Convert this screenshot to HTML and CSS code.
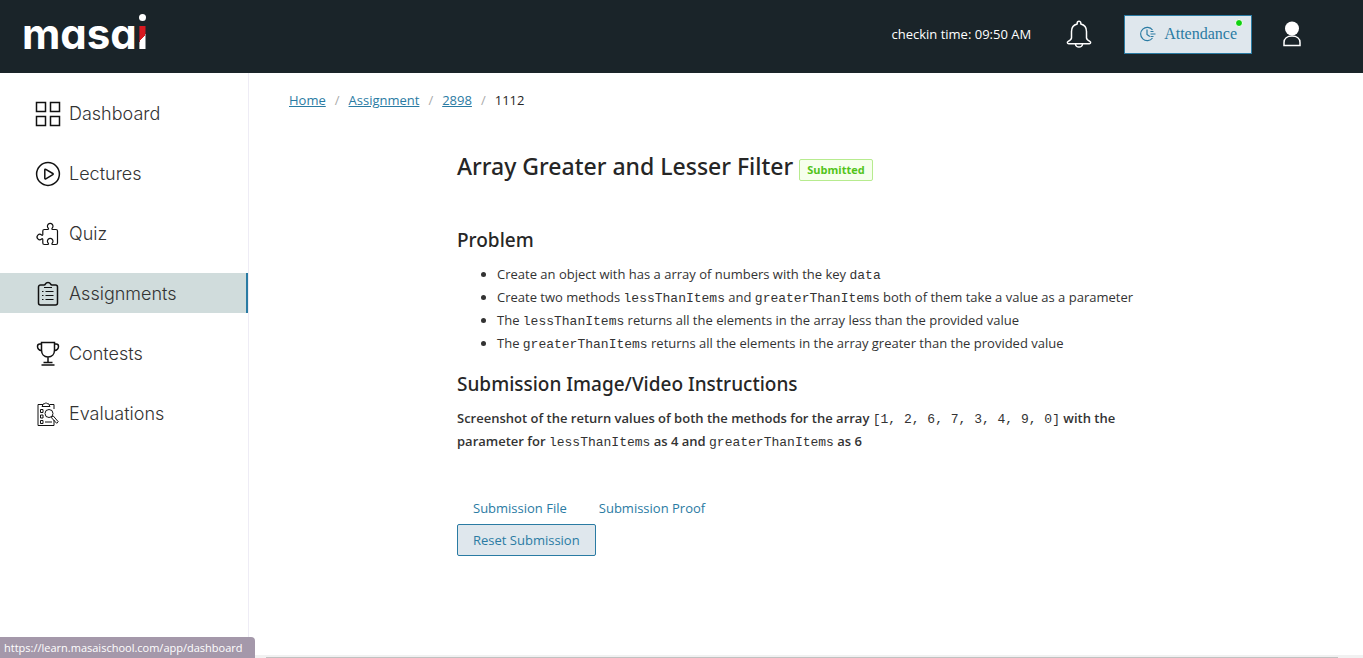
FILE: index.html
```html
<!DOCTYPE html>
<html lang="en">
<head>
<meta charset="utf-8">
<meta name="viewport" content="width=device-width, initial-scale=1">
<title>Array Greater and Lesser Filter</title>
<link rel="stylesheet" href="styles.css">
</head>
<body>
<header class="topbar">
  <a class="logo" href="#">masa<span class="logo-i">i</span></a>
  <div class="topbar-tools">
    <span class="checkin">checkin time: 09:50 AM</span>
    <button class="icon-button" type="button" aria-label="Notifications">
      <svg width="26" height="28" viewBox="0 0 26 28" fill="none" stroke="#fff" stroke-width="1.5" stroke-linejoin="round"><path d="M11.2 4.1V3a1.8 1.8 0 0 1 3.6 0v1.1c3.700.9 5.700 3.900 5.700 7.400v6.200c0 1.700 1.200 2.600 3.300 3.700 1.400.8.900 2.300-.5 2.300H2.700c-1.400 0-1.900-1.500-.5-2.300 2.100-1.100 3.300-2 3.300-3.700v-6.200c0-3.500 2-6.500 5.700-7.400z"/><path d="M9.500 23.900a3.500 3.200 0 0 0 7 0"/></svg>
    </button>
    <button class="attendance" type="button">
      <svg width="18" height="16" viewBox="0 0 18 16" fill="none" stroke="#2a7ba3" stroke-width="1.2"><path d="M13.500 4A6.600 6.600 0 1 0 13.500 12M8 3.500v5l2.800 2M11.500 5.500h3M11.500 8h5M11.500 10.500h3"/></svg>
      <span>Attendance</span>
      <span class="status-dot"></span>
    </button>
    <button class="icon-button" type="button" aria-label="Profile">
      <svg width="18" height="26" viewBox="0 0 18 26"><circle cx="9" cy="7.500" r="7" fill="#fff"/><path d="M1 24.400v-3C1 17.600 4.200 15 9 15s8 2.600 8 6.400v3z" fill="none" stroke="#fff" stroke-width="1.500"/></svg>
    </button>
  </div>
</header>
<div class="shell">
  <nav class="sidebar" aria-label="Main">
    <a class="nav-item" href="#"><svg class="nav-icon" viewBox="0 0 26 26"><path d="M1.500 1.500h9v9h-9zM15.500 1.500h9v9h-9zM1.500 15.500h9v9h-9zM15.500 15.500h9v9h-9z"/></svg>Dashboard</a>
    <a class="nav-item" href="#"><svg class="nav-icon" viewBox="0 0 26 26"><circle cx="13" cy="13" r="11.400"/><path d="M9.800 8.900v8.400c0 .6.500.9 1 .6l7-4.200c.5-.3.5-.9 0-1.200l-7-4.200c-.5-.3-1 0-1 .6z"/></svg>Lectures</a>
    <a class="nav-item" href="#"><svg class="nav-icon nav-icon-fine" viewBox="0 0 26 26"><path d="M9.300 8.500h3.500c.8 0 1-.6.500-1.200a2.800 2.800 0 1 1 3.800 0c-.5.6-.3 1.200.5 1.200h3.400c1 0 1.500.5 1.500 1.500v12c0 1-.5 1.500-1.500 1.500h-3.400c-.8 0-1-.6-.5-1.200a2.800 2.800 0 1 0-3.800 0c.5.6.3 1.200-.5 1.200H9.300c-1 0-1.500-.5-1.500-1.500V18.500c0-.8-.6-1-1.200-.5a2.700 2.700 0 1 1 0-4c.6.500 1.200.3 1.200-.5V10c0-1 .5-1.500 1.500-1.500z"/></svg>Quiz</a>
    <a class="nav-item nav-item-active" href="#" aria-current="page"><svg class="nav-icon" viewBox="0 0 26 26"><path d="M9 4H5.500A2 2 0 0 0 3.500 6v16a2 2 0 0 0 2 2h15a2 2 0 0 0 2-2V6a2 2 0 0 0-2-2H17c-.9 0-1.200-.5-1.500-1.100-.9-1.900-4.100-1.900-5 0C10.200 3.500 9.900 4 9 4z"/><path stroke-width="1.200" d="M9 6.500h8M10.500 10.500h8M10.500 14.500h8M10.500 18.500h8M7 10.500h1.500M7 14.500h1.500M7 18.500h1.500"/></svg>Assignments</a>
    <a class="nav-item" href="#"><svg class="nav-icon" viewBox="0 0 26 26"><path d="M6.500 1.500h13v7.500c0 4-2.500 7-6.500 7s-6.500-3-6.500-7zM6.500 3H4.800C3.300 3 2.500 4 2.500 5.500 2.500 8 4 9.300 6.800 9.800M19.500 3h1.700c1.500 0 2.300 1 2.300 2.500 0 2.500-1.500 3.800-4.300 4.300M13 16v5.500M8.500 21.500h9M6.500 24h13"/></svg>Contests</a>
    <a class="nav-item" href="#"><svg class="nav-icon nav-icon-thin" viewBox="0 0 26 26"><path d="M8 3.500H3v21h16V19M14.500 3.500H19V8M7 5.500h8l-1.500-2.800h-1.300a1.300 1.300 0 0 0-2.400 0H8.500zM5.500 8.500H8v3H5.500zM5.500 14H8v3H5.500zM5.500 19.500H8v3H5.500zM10 21h7"/><circle cx="14" cy="12.500" r="4"/><path d="M17 15.500l1.200-.6 5 5.800-1.500 1.600-5.200-5.500z"/></svg>Evaluations</a>
  </nav>
  <main class="content">
    <nav class="breadcrumb" aria-label="Breadcrumb">
      <a href="#">Home</a><span class="slash">/</span><a href="#">Assignment</a><span class="slash">/</span><a href="#">2898</a><span class="slash">/</span><span>1112</span>
    </nav>
    <article class="assignment">
      <h1 class="title">Array Greater and Lesser Filter <span class="tag">Submitted</span></h1>
      <h2 class="section-title">Problem</h2>
      <ul class="steps">
        <li>Create an object with has a array of numbers with the key <code>data</code></li>
        <li>Create two methods <code>lessThanItems</code> and <code>greaterThanItems</code> both of them take a value as a parameter</li>
        <li>The <code>lessThanItems</code> returns all the elements in the array less than the provided value</li>
        <li>The <code>greaterThanItems</code> returns all the elements in the array greater than the provided value</li>
      </ul>
      <h2 class="section-title">Submission Image/Video Instructions</h2>
      <p class="instructions">Screenshot of the return values of both the methods for the array <code>[1, 2, 6, 7, 3, 4, 9, 0]</code> with the parameter for <code>lessThanItems</code> as 4 and <code>greaterThanItems</code> as 6</p>
      <div class="links"><a href="#">Submission File</a><a href="#">Submission Proof</a></div>
      <button class="reset" type="button">Reset Submission</button>
    </article>
  </main>
</div>
<div class="scroll-track"><div class="scroll-thumb"></div></div>
<div class="url-status">https://learn.masaischool.com/app/dashboard</div>
</body>
</html>
```
FILE: styles.css
```css
* { box-sizing: border-box; }
body {
  margin: 0;
  min-height: 100vh;
  display: flex;
  flex-direction: column;
  background: #fff;
  color: #262626;
  font: 13px/23px "Open Sans", "Noto Sans", sans-serif;
}
button { font: inherit; cursor: pointer; }
a { color: #2a7ba3; text-decoration: none; }
.topbar {
  display: flex;
  align-items: center;
  justify-content: space-between;
  height: 73px;
  padding: 0 62px 5px 22px;
  background: #1a2429;
  color: #fff;
}
.logo {
  color: #fff;
  font: 700 42px/52px Inter, sans-serif;
  font-feature-settings: "cv11";
}
.logo-i {
  position: relative;
  display: inline-block;
  background: linear-gradient(130deg, #d71920 50%, #fff 50%) 0 17px / 100% 26px no-repeat;
  background-clip: text;
  -webkit-background-clip: text;
  color: transparent;
}
.logo-i::after {
  content: "";
  position: absolute;
  top: 6px;
  left: calc(50% - 4px);
  width: 7px;
  height: 7px;
  border-radius: 50%;
  background: #fff;
}
.topbar-tools { display: flex; align-items: center; }
.checkin { margin-right: 35px; }
.icon-button {
  display: flex;
  padding: 0;
  border: 0;
  background: none;
}
.attendance {
  position: relative;
  display: flex;
  align-items: center;
  gap: 7px;
  height: 39px;
  margin: 0 31px 0 32px;
  padding: 0 14px;
  border: 1px solid #2a7ba3;
  background: #dfe7ed;
  color: #2a7ba3;
  font: 16px/24px "Liberation Serif", serif;
}
.status-dot {
  position: absolute;
  top: 3px;
  right: 8px;
  width: 8px;
  height: 8px;
  border: 1px solid #fff;
  border-radius: 50%;
  background: #0fd20f;
}
.shell { display: flex; flex: 1; }
.sidebar {
  display: flex;
  flex-direction: column;
  gap: 20px;
  width: 249px;
  padding-top: 20px;
  border-right: 1px solid #eeecf5;
}
.nav-item {
  display: flex;
  align-items: center;
  gap: 8px;
  height: 40px;
  padding: 2px 0 0 35px;
  color: #333;
  font: 300 18px/24px Inter, sans-serif;
}
.nav-item-active {
  border-right: 2px solid #2a7ba3;
  background: #d0dcdc;
}
.nav-icon {
  width: 26px;
  height: 26px;
  fill: none;
  stroke: #111;
  stroke-width: 1.5;
}
.nav-icon-fine { stroke-width: 1.2; }
.nav-icon-thin { stroke-width: 1; }
.content { flex: 1; padding: 16px 40px; }
.breadcrumb { display: flex; }
.breadcrumb a { text-decoration: underline; }
.slash { margin: 0 9px; color: #aaa; }
.assignment { max-width: 858px; margin-top: 38px; padding-left: 168px; }
.title { margin: 0; font: 500 23px/32px "Noto Sans", sans-serif; }
.tag {
  display: inline-block;
  padding: 0 7px;
  border: 1px solid #b7eb8f;
  border-radius: 2px;
  background: #f6ffed;
  color: #52c41a;
  font: 700 11px/20px "Open Sans", sans-serif;
  vertical-align: 1px;
}
.section-title { margin: 0 0 9px; font: 500 19px/28px "Noto Sans", sans-serif; }
.title + .section-title { margin-top: 44px; }
.steps { margin: 0 0 15px; padding-left: 40px; color: #333; }
code { font: 13px/16px "Liberation Mono", monospace; }
.instructions { margin: 0 0 44px; color: #333; font-weight: 600; }
.links { display: flex; gap: 32px; padding: 0 16px; }
.reset {
  display: block;
  height: 32px;
  margin-top: 4px;
  padding: 0 15px;
  border: 1px solid #2a7ba3;
  border-radius: 2px;
  background: #dfe7ed;
  color: #2a7ba3;
}
.scroll-track {
  position: fixed;
  right: 0;
  bottom: 0;
  left: 249px;
  height: 3px;
  padding: 2px 25px 0 17px;
  background: #f1f1f1;
}
.scroll-thumb { height: 1px; background: #c1c1c1; }
.url-status {
  position: fixed;
  bottom: 0;
  left: 0;
  padding: 0 12px 0 4px;
  border-top-right-radius: 4px;
  background: #a498aa;
  color: #fff;
  font-size: 11px;
  line-height: 21px;
}
```
